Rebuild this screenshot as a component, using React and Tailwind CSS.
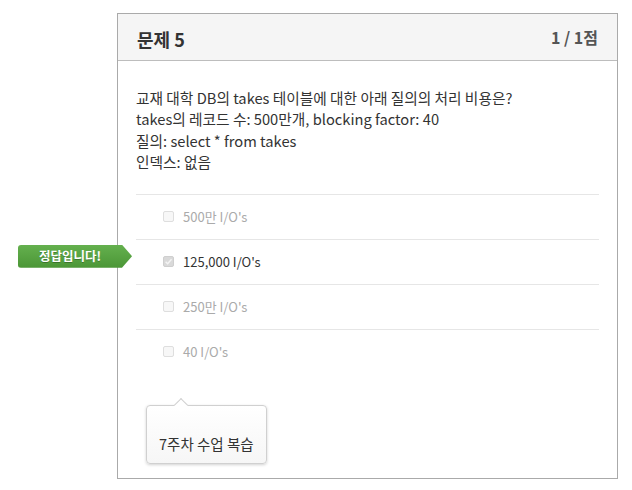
const options = [
  { label: "500만 I/O's", checked: false, correct: false },
  { label: "125,000 I/O's", checked: true, correct: true },
  { label: "250만 I/O's", checked: false, correct: false },
  { label: "40 I/O's", checked: false, correct: false },
];

const CheckBox = ({ checked }) => (
  <div
    className={
      checked
        ? "w-[11px] h-[11px] rounded-[2px] border border-[#cfcfcf] bg-[#d9d9d9] flex items-center justify-center"
        : "w-[11px] h-[11px] rounded-[2px] border border-[#dedede] bg-[#f7f7f7]"
    }
  >
    {checked && (
      <svg width="9" height="9" viewBox="0 0 10 10">
        <path d="M1.8 5.2 L4 7.4 L8.4 2.4" fill="none" stroke="#f4f4f4" strokeWidth="1.6" />
      </svg>
    )}
  </div>
);

const App = () => {
  return (
    <div
      className="w-[632px] h-[490px] bg-white pl-[117px] pt-[13px]"
      style={{ fontFamily: '"Noto Sans CJK KR", "Noto Sans", sans-serif' }}
    >
      <div className="w-[501px] h-[466px] border border-[#aaaaaa] bg-white">
        <div className="h-[47px] bg-[#f5f5f5] border-b border-[#bdbdbd] px-[19px] flex items-center justify-between">
          <div className="text-[18px] font-bold text-[#333] pt-[5px]">문제 5</div>
          <div className="text-[16px] font-bold text-[#555]">1 / 1점</div>
        </div>

        <div className="px-[18px] pt-[26px] pb-[14px]">
          <div className="text-[14.7px] leading-[21.4px] text-[#333]">
            <div>교재 대학 DB의 takes 테이블에 대한 아래 질의의 처리 비용은?</div>
            <div>takes의 레코드 수: 500만개, blocking factor: 40</div>
            <div>질의: select * from takes</div>
            <div>인덱스: 없음</div>
          </div>

          <div className="mt-[21px]">
            {options.map((o) => (
              <div
                key={o.label}
                className="relative border-t border-[#e6e6e6] pt-[12px] pb-[12px] pl-[27px] flex items-center gap-[9px] h-[45px]"
              >
                <CheckBox checked={o.checked} />
                <span
                  className={
                    o.checked
                      ? "text-[13px] leading-[20px] text-[#333]"
                      : "text-[13px] leading-[20px] text-[#aaaaaa]"
                  }
                >
                  {o.label}
                </span>
                {o.correct && (
                  <div className="absolute left-[-118px] top-[5px] h-[23px] w-[114px] rounded-l-[3px] bg-gradient-to-b from-[#64b04e] to-[#4b9636] [clip-path:polygon(0_0,104px_0,114px_50%,104px_100%,0_100%)]">
                    <div className="w-[104px] h-full flex items-center justify-center text-[12.5px] font-bold text-white [text-shadow:0_1px_0_rgba(0,0,0,0.25)]">
                      정답입니다!
                    </div>
                  </div>
                )}
              </div>
            ))}
          </div>

          <div className="relative mt-[31px] ml-[10px] w-[121px] h-[59px] rounded-[4px] border border-[#d0d0d0] bg-gradient-to-b from-white to-[#f6f6f6] shadow-[0_1px_3px_rgba(0,0,0,0.18)] pl-[12px] pt-[28px]">
            <div className="absolute left-[29px] top-[-6px] w-[10px] h-[10px] rotate-45 bg-white border-l border-t border-[#d0d0d0]" />
            <div className="text-[14.5px] leading-[20px] text-[#333]">7주차 수업 복습</div>
          </div>
        </div>
      </div>
    </div>
  );
};

export default App;
